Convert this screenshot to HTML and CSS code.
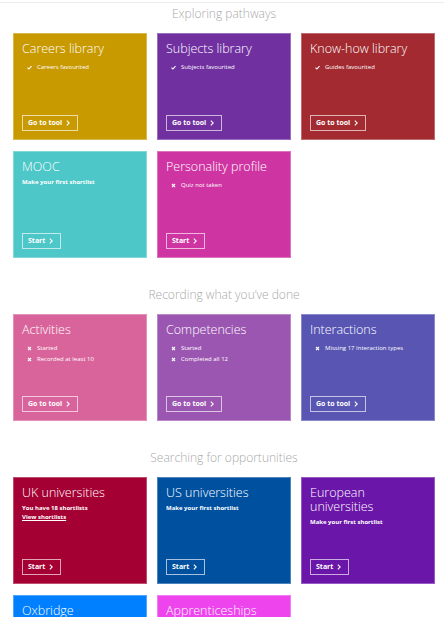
FILE: index.html
```html
<!DOCTYPE html>
<html lang="en">
<head>
<meta charset="utf-8">
<title>Dashboard</title>
<link rel="stylesheet" href="styles.css">
</head>
<body>
<div class="topbar"></div>
<main class="page">
  <section class="section">
    <h2 class="section-title">Exploring pathways</h2>
    <div class="grid">
      <div class="card c-careers">
        <h3 class="card-title">Careers library</h3>
        <ul class="status">
          <li><svg class="ic" viewBox="0 0 10 10"><path d="M1 5.4 L3.8 8 L9 2.2" fill="none" stroke="#fff" stroke-width="2.2"/></svg>Careers favourited</li>
        </ul>
        <a class="btn">Go to tool<svg class="chev" viewBox="0 0 6 10"><path d="M1 1 L5 5 L1 9" fill="none" stroke="#fff" stroke-width="1.8"/></svg></a>
      </div>
      <div class="card c-subjects">
        <h3 class="card-title">Subjects library</h3>
        <ul class="status">
          <li><svg class="ic" viewBox="0 0 10 10"><path d="M1 5.4 L3.8 8 L9 2.2" fill="none" stroke="#fff" stroke-width="2.2"/></svg>Subjects favourited</li>
        </ul>
        <a class="btn">Go to tool<svg class="chev" viewBox="0 0 6 10"><path d="M1 1 L5 5 L1 9" fill="none" stroke="#fff" stroke-width="1.8"/></svg></a>
      </div>
      <div class="card c-knowhow">
        <h3 class="card-title">Know-how library</h3>
        <ul class="status">
          <li><svg class="ic" viewBox="0 0 10 10"><path d="M1 5.4 L3.8 8 L9 2.2" fill="none" stroke="#fff" stroke-width="2.2"/></svg>Guides favourited</li>
        </ul>
        <a class="btn">Go to tool<svg class="chev" viewBox="0 0 6 10"><path d="M1 1 L5 5 L1 9" fill="none" stroke="#fff" stroke-width="1.8"/></svg></a>
      </div>
      <div class="card c-mooc">
        <h3 class="card-title">MOOC</h3>
        <p class="note">Make your first shortlist</p>
        <a class="btn">Start<svg class="chev" viewBox="0 0 6 10"><path d="M1 1 L5 5 L1 9" fill="none" stroke="#fff" stroke-width="1.8"/></svg></a>
      </div>
      <div class="card c-personality">
        <h3 class="card-title">Personality profile</h3>
        <ul class="status">
          <li><svg class="ic" viewBox="0 0 10 10"><path d="M2 2 L8 8 M8 2 L2 8" fill="none" stroke="#fff" stroke-width="2.2"/></svg>Quiz not taken</li>
        </ul>
        <a class="btn">Start<svg class="chev" viewBox="0 0 6 10"><path d="M1 1 L5 5 L1 9" fill="none" stroke="#fff" stroke-width="1.8"/></svg></a>
      </div>
    </div>
  </section>

  <section class="section">
    <h2 class="section-title">Recording what you’ve done</h2>
    <div class="grid">
      <div class="card c-activities">
        <h3 class="card-title">Activities</h3>
        <ul class="status">
          <li><svg class="ic" viewBox="0 0 10 10"><path d="M2 2 L8 8 M8 2 L2 8" fill="none" stroke="#fff" stroke-width="2.2"/></svg>Started</li>
          <li><svg class="ic" viewBox="0 0 10 10"><path d="M2 2 L8 8 M8 2 L2 8" fill="none" stroke="#fff" stroke-width="2.2"/></svg>Recorded at least 10</li>
        </ul>
        <a class="btn">Go to tool<svg class="chev" viewBox="0 0 6 10"><path d="M1 1 L5 5 L1 9" fill="none" stroke="#fff" stroke-width="1.8"/></svg></a>
      </div>
      <div class="card c-competencies">
        <h3 class="card-title">Competencies</h3>
        <ul class="status">
          <li><svg class="ic" viewBox="0 0 10 10"><path d="M2 2 L8 8 M8 2 L2 8" fill="none" stroke="#fff" stroke-width="2.2"/></svg>Started</li>
          <li><svg class="ic" viewBox="0 0 10 10"><path d="M2 2 L8 8 M8 2 L2 8" fill="none" stroke="#fff" stroke-width="2.2"/></svg>Completed all 12</li>
        </ul>
        <a class="btn">Go to tool<svg class="chev" viewBox="0 0 6 10"><path d="M1 1 L5 5 L1 9" fill="none" stroke="#fff" stroke-width="1.8"/></svg></a>
      </div>
      <div class="card c-interactions">
        <h3 class="card-title">Interactions</h3>
        <ul class="status">
          <li><svg class="ic" viewBox="0 0 10 10"><path d="M2 2 L8 8 M8 2 L2 8" fill="none" stroke="#fff" stroke-width="2.2"/></svg>Missing 17 Interaction types</li>
        </ul>
        <a class="btn">Go to tool<svg class="chev" viewBox="0 0 6 10"><path d="M1 1 L5 5 L1 9" fill="none" stroke="#fff" stroke-width="1.8"/></svg></a>
      </div>
    </div>
  </section>

  <section class="section">
    <h2 class="section-title">Searching for opportunities</h2>
    <div class="grid">
      <div class="card c-uk">
        <h3 class="card-title">UK universities</h3>
        <p class="note">You have 18 shortlists</p>
        <p class="note tight"><a class="link">View shortlists</a></p>
        <a class="btn">Start<svg class="chev" viewBox="0 0 6 10"><path d="M1 1 L5 5 L1 9" fill="none" stroke="#fff" stroke-width="1.8"/></svg></a>
      </div>
      <div class="card c-us">
        <h3 class="card-title">US universities</h3>
        <p class="note">Make your first shortlist</p>
        <a class="btn">Start<svg class="chev" viewBox="0 0 6 10"><path d="M1 1 L5 5 L1 9" fill="none" stroke="#fff" stroke-width="1.8"/></svg></a>
      </div>
      <div class="card c-europe">
        <h3 class="card-title">European universities</h3>
        <p class="note">Make your first shortlist</p>
        <a class="btn">Start<svg class="chev" viewBox="0 0 6 10"><path d="M1 1 L5 5 L1 9" fill="none" stroke="#fff" stroke-width="1.8"/></svg></a>
      </div>
      <div class="card c-oxbridge">
        <h3 class="card-title">Oxbridge</h3>
      </div>
      <div class="card c-apprentice">
        <h3 class="card-title">Apprenticeships</h3>
      </div>
    </div>
  </section>
</main>
</body>
</html>
```

FILE: styles.css
```css
html, body {
  margin: 0;
  padding: 0;
  background: #fff;
}
body {
  font-family: "Open Sans", "Liberation Sans", sans-serif;
  color: #fff;
}
.topbar {
  height: 2px;
  border-bottom: 1px solid #ececec;
}
.page {
  padding: 1px 9px 0 13px;
}
.section + .section {
  margin-top: 27px;
}
.section-title {
  margin: 0 0 9px;
  font-size: 12px;
  line-height: 20px;
  font-weight: 300;
  color: #a9a9a9;
  text-align: center;
}
.grid {
  display: grid;
  grid-template-columns: repeat(3, 134px);
  gap: 11px 10px;
}
.card {
  box-sizing: border-box;
  height: 107px;
  border: 1px solid rgba(255, 255, 255, 0.3);
  padding: 8px 8px 8px 8px;
  display: flex;
  flex-direction: column;
  align-items: flex-start;
}
.card-title {
  margin: 0;
  font-size: 12.5px;
  line-height: 14px;
  font-weight: 300;
}
.status {
  list-style: none;
  margin: 6px 0 0;
  padding: 0 0 0 5px;
}
.status li {
  display: flex;
  align-items: center;
  font-size: 6px;
  line-height: 11px;
}
.ic {
  width: 5px;
  height: 5px;
  margin-right: 5px;
  flex: none;
}
.note {
  margin: 4px 0 0;
  font-size: 6px;
  line-height: 8.5px;
  font-weight: 700;
}
.note.tight {
  margin-top: 0;
}
.link {
  text-decoration: underline;
}
.btn {
  margin-top: auto;
  box-sizing: border-box;
  height: 16px;
  display: inline-flex;
  align-items: center;
  border: 1px solid rgba(255, 255, 255, 0.65);
  padding: 0 7px 0 5px;
  font-size: 7px;
  font-weight: 700;
  line-height: 14px;
}
.chev {
  width: 4px;
  height: 6px;
  margin-left: 4px;
}
.c-careers { background: #c89a00; }
.c-subjects { background: #7030a0; }
.c-knowhow { background: #a22a30; }
.c-mooc { background: #4dc7c7; }
.c-personality { background: #cf35a2; }
.c-activities { background: #d9649b; }
.c-competencies { background: #9b56b1; }
.c-interactions { background: #5955b3; }
.c-uk { background: #a50034; }
.c-us { background: #0050a0; }
.c-europe { background: #6a16a9; }
.c-oxbridge { background: #0080ff; }
.c-apprentice { background: #ee44ee; }
```
